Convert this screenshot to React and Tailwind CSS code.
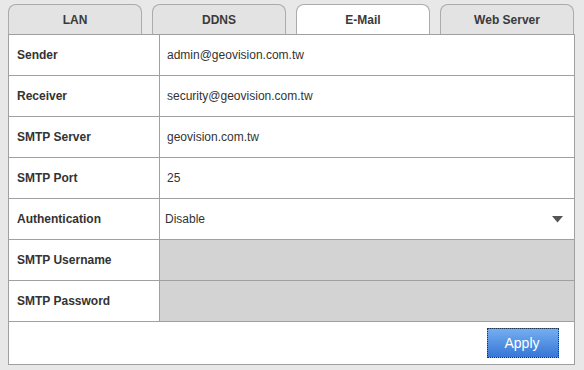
const tabs = ["LAN", "DDNS", "E-Mail", "Web Server"];

const rows = [
  { label: "Sender", value: "admin@geovision.com.tw" },
  { label: "Receiver", value: "security@geovision.com.tw" },
  { label: "SMTP Server", value: "geovision.com.tw" },
  { label: "SMTP Port", value: "25" },
  { label: "Authentication", value: "Disable", select: true },
  { label: "SMTP Username", disabled: true },
  { label: "SMTP Password", disabled: true },
];

const App = () => {
  return (
    <div className="w-[584px] h-[370px] bg-[#e8e8e8] pl-[8px] pt-[4px] font-['Liberation_Sans',Arial,sans-serif] text-[12px] text-[#333]">
      {/* Tabs */}
      <div className="flex gap-[10px]">
        {tabs.map((t) => (
          <div
            key={t}
            className={`w-[134px] h-[30px] flex items-center justify-center rounded-t-[8px] border border-b-0 border-[#ababab] font-bold text-[#3a3a3a] ${
              t === "E-Mail" ? "bg-white" : "bg-[#e3e3e3]"
            }`}
          >
            {t}
          </div>
        ))}
      </div>

      {/* Form table */}
      <div className="w-[567px] border border-[#a0a0a0] bg-white">
        {rows.map((r) => (
          <div key={r.label} className="flex h-[41px] border-b border-[#a0a0a0]">
            <div className="w-[151px] shrink-0 border-r border-[#a0a0a0] flex items-center pl-[8px] font-bold text-[#333]">
              {r.label}
            </div>
            <div
              className={`flex-1 flex items-center text-[#333] ${
                r.select ? "pl-[5px] pr-[11px]" : "pl-[7px] pr-[10px]"
              } ${r.disabled ? "bg-[#d3d3d3]" : "bg-white"}`}
            >
              <span className="flex-1">{r.value}</span>
              {r.select && (
                <svg width="11" height="7" viewBox="0 0 11 7">
                  <path d="M0 0 H11 L5.5 6.5 Z" fill="#555" />
                </svg>
              )}
            </div>
          </div>
        ))}
        <div className="h-[42px] flex justify-end items-start pt-[6px] pr-[15px]">
          <button className="w-[72px] h-[30px] border border-dotted border-[#1d3557] bg-gradient-to-b from-[#74aef0] to-[#3676d6] text-white text-[14px] pr-[2px] font-['Liberation_Sans',Arial,sans-serif]">
            Apply
          </button>
        </div>
      </div>
    </div>
  );
};

export default App;
